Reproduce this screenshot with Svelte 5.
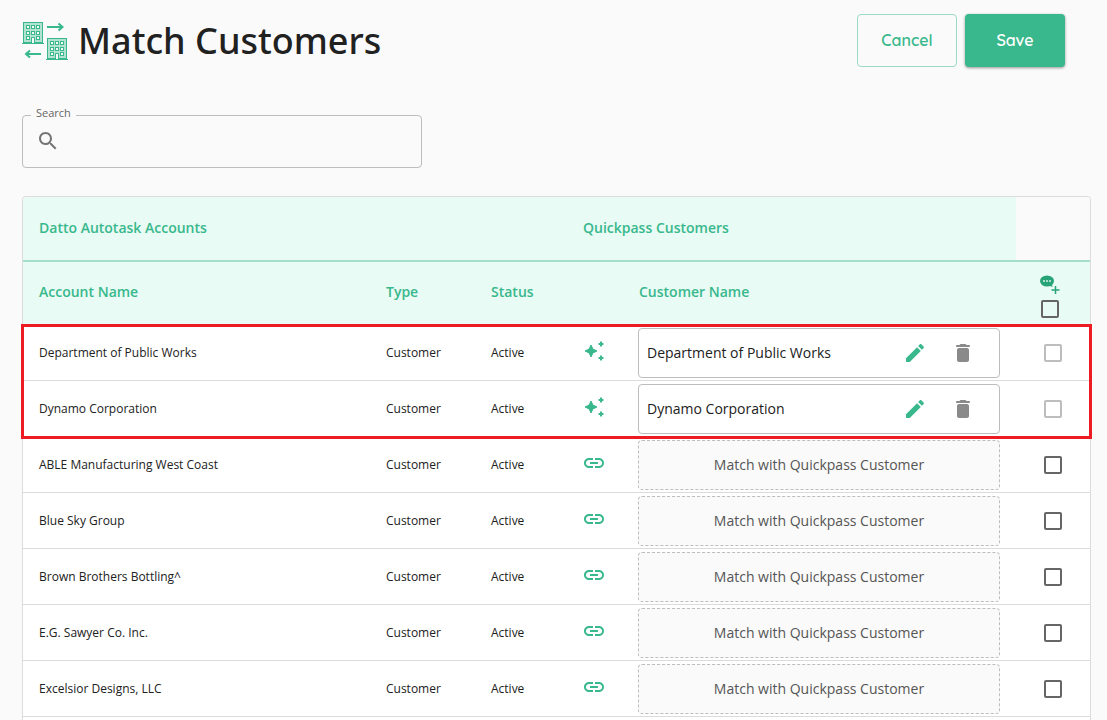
<script>
	let search = $state('');
	let addAll = $state(false);

	let matched = $state([
		{ name: 'Department of Public Works', type: 'Customer', status: 'Active', customer: 'Department of Public Works' },
		{ name: 'Dynamo Corporation', type: 'Customer', status: 'Active', customer: 'Dynamo Corporation' }
	]);

	let unmatched = $state([
		{ name: 'ABLE Manufacturing West Coast', type: 'Customer', status: 'Active', add: false },
		{ name: 'Blue Sky Group', type: 'Customer', status: 'Active', add: false },
		{ name: 'Brown Brothers Bottling^', type: 'Customer', status: 'Active', add: false },
		{ name: 'E.G. Sawyer Co. Inc.', type: 'Customer', status: 'Active', add: false },
		{ name: 'Excelsior Designs, LLC', type: 'Customer', status: 'Active', add: false }
	]);

	function toggleAll() {
		unmatched.forEach((row) => (row.add = addAll));
	}
</script>

{#snippet building(x, y)}
	<g transform="translate({x} {y})">
		<rect x="1.5" y="0.5" width="19" height="20" fill="#b2e3d1" stroke="#38b88c" />
		<path d="M0 21.5h22" stroke="#38b88c" />
		{#each [4.5, 9.5, 14.5] as wx}
			{#each [3.5, 9.5, 14.5] as wy}
				{#if wx !== 9.5 || wy !== 14.5}
					<rect x={wx} y={wy} width="3" height="3" fill="#fafafa" stroke="#38b88c" />
				{/if}
			{/each}
		{/each}
		<path d="M9.5 21v-5.5h3V21" fill="#fafafa" stroke="#38b88c" />
	</g>
{/snippet}

<div class="page">
	<header>
		<svg class="logo" width="48" height="40" viewBox="0 0 48 40" fill="none">
			{@render building(0, 1)}
			{@render building(24, 17)}
			<path d="M25 6h15M36.5 2.5L40.5 6l-4 3.5" stroke="#38b88c" stroke-width="2" />
			<path d="M19 33H4M8 29.500L4 33l4 3.500" stroke="#38b88c" stroke-width="2" />
		</svg>
		<h1>Match Customers</h1>
		<div class="actions">
			<button class="cancel">Cancel</button>
			<button class="save">Save</button>
		</div>
	</header>

	<fieldset class="search">
		<legend><label for="search">Search</label></legend>
		<div class="field">
			<svg width="24" height="24" viewBox="0 0 24 24" fill="#757575">
				<path d="M15.5 14h-.79l-.28-.27C15.41 12.590 16 11.110 16 9.500 16 5.910 13.090 3 9.500 3S3 5.910 3 9.500 5.910 16 9.500 16c1.610 0 3.090-.59 4.230-1.570l.27.28v.79l5 4.990L20.490 19l-4.990-5zm-6 0C7.010 14 5 11.990 5 9.500S7.010 5 9.500 5 14 7.010 14 9.500 11.990 14 9.500 14z" />
			</svg>
			<input id="search" type="text" bind:value={search} />
		</div>
	</fieldset>

	<div class="panel">
		<table>
			<colgroup>
				<col />
				<col class="col-type" />
				<col class="col-status" />
				<col class="col-icon" />
				<col class="col-customer" />
				<col class="col-check" />
			</colgroup>
			<thead>
				<tr class="groups">
					<th colspan="3">Datto Autotask Accounts</th>
					<th colspan="2">Quickpass Customers</th>
					<td class="blank"></td>
				</tr>
				<tr class="columns">
					<th>Account Name</th>
					<th>Type</th>
					<th>Status</th>
					<th></th>
					<th>Customer Name</th>
					<th class="add-all">
						<svg width="22" height="20" viewBox="0 0 22 20">
							<ellipse cx="8" cy="6" rx="7" ry="5.500" fill="#26a477" />
							<path d="M9 10l4-1 .5 3z" fill="#26a477" />
							<path d="M4 6h2M7 6h2M10 6h2" stroke="#d5efe5" stroke-width="1.500" />
							<path d="M16.500 11v8M12.500 15h8" stroke="#26a477" stroke-width="1.500" />
						</svg>
						<input type="checkbox" aria-label="Add all customers" bind:checked={addAll} onchange={toggleAll} />
					</th>
				</tr>
			</thead>
			<tbody class="highlight">
				{#each matched as row}
					<tr>
						<td>{row.name}</td>
						<td>{row.type}</td>
						<td>{row.status}</td>
						<td class="icon">
							<svg width="24" height="24" viewBox="0 0 24 24" fill="#38b88c" stroke="#38b88c" stroke-linejoin="round">
								<path d="M9 6l1.900 4.100L15 12l-4.100 1.900L9 18l-1.900-4.100L3 12l4.100-1.900z" />
								<path d="M19 2.500l.8 1.700 1.700.8-1.700.8-.8 1.700-.8-1.700-1.700-.8 1.700-.8zM19 16.500l.8 1.700 1.700.8-1.700.8-.8 1.700-.8-1.700-1.700-.8 1.700-.8z" />
							</svg>
						</td>
						<td class="customer">
							<div class="match">
								<span>{row.customer}</span>
								<button aria-label="Edit match">
									<svg width="24" height="24" viewBox="0 0 24 24" fill="#38b88c">
										<path d="M3 17.250V21h3.750L17.810 9.940l-3.750-3.750L3 17.250zM20.710 7.040c.39-.39.39-1.020 0-1.410l-2.340-2.340c-.39-.39-1.020-.39-1.410 0l-1.830 1.830 3.750 3.750 1.830-1.830z" />
									</svg>
								</button>
								<button aria-label="Remove match">
									<svg width="24" height="24" viewBox="0 0 24 24" fill="#8a8a8a">
										<path d="M6 19c0 1.100.9 2 2 2h8c1.100 0 2-.9 2-2V9c0-1.100-.9-2-2-2H8c-1.100 0-2 .9-2 2v10zM18 4h-2.500l-.71-.71c-.18-.18-.44-.29-.7-.29H9.910c-.26 0-.52.11-.7.29L8.500 4H6c-.55 0-1 .45-1 1s.45 1 1 1h12c.55 0 1-.45 1-1s-.45-1-1-1z" />
									</svg>
								</button>
							</div>
						</td>
						<td class="check"><input type="checkbox" aria-label="Add {row.name}" disabled /></td>
					</tr>
				{/each}
			</tbody>
			<tbody>
				{#each unmatched as row}
					<tr>
						<td>{row.name}</td>
						<td>{row.type}</td>
						<td>{row.status}</td>
						<td class="icon">
							<svg width="24" height="24" viewBox="0 0 24 24" fill="#38b88c">
								<path d="M3.900 12c0-1.710 1.390-3.100 3.100-3.100h4V7H7c-2.760 0-5 2.240-5 5s2.240 5 5 5h4v-1.900H7c-1.710 0-3.100-1.390-3.100-3.100zM8 13h8v-2H8v2zm9-6h-4v1.900h4c1.710 0 3.100 1.390 3.100 3.100s-1.390 3.100-3.100 3.100h-4V17h4c2.760 0 5-2.240 5-5s-2.240-5-5-5z" />
							</svg>
						</td>
						<td class="customer"><button class="match empty">Match with Quickpass Customer</button></td>
						<td class="check"><input type="checkbox" aria-label="Add {row.name}" bind:checked={row.add} /></td>
					</tr>
				{/each}
			</tbody>
		</table>
	</div>
</div>

<style>
	:global(body) {
		background: #fafafa;
	}

	.page {
		display: flex;
		flex-direction: column;
		box-sizing: border-box;
		height: 100vh;
		overflow: hidden;
		padding: 14px 16px 0 22px;
		font-family: 'Open Sans', sans-serif;
		color: #212121;
	}

	header {
		display: flex;
		align-items: center;
		height: 54px;
		padding-right: 26px;
		margin-bottom: 38px;
		flex-shrink: 0;
	}

	h1 {
		margin: 0 0 0 8px;
		font-family: 'Noto Sans', 'Open Sans', sans-serif;
		font-size: 36px;
		line-height: 54px;
		font-weight: 500;
	}

	.actions {
		display: flex;
		gap: 8px;
		align-self: flex-start;
		margin-left: auto;
	}

	.actions button {
		width: 100px;
		height: 53px;
		padding-bottom: 2px;
		border-radius: 4px;
		font: 600 16px Quicksand, Lato, sans-serif;
		cursor: pointer;
	}

	.cancel {
		background: transparent;
		border: 1px solid #9bdbc5;
		color: #38b88c;
	}

	.save {
		background: #38b88c;
		border: none;
		color: #fff;
		box-shadow: 0 1px 3px rgba(0, 0, 0, 0.4);
	}

	/* Search */
	.search {
		box-sizing: border-box;
		width: 400px;
		height: 62px;
		margin: 0 0 28px;
		padding: 0 13px;
		border: 1px solid #bdbdbd;
		border-radius: 4px;
		flex-shrink: 0;
	}

	.search legend {
		margin-left: -5px;
		padding: 0 5px 4px;
		font-size: 11px;
		line-height: 14px;
		color: #666;
	}

	.field {
		display: flex;
		align-items: center;
		height: 34px;
	}

	.field input {
		flex: 1;
		min-width: 0;
		border: none;
		outline: none;
		background: none;
		font: 14px 'Open Sans', sans-serif;
	}

	/* Table */
	.panel {
		flex: 1;
		min-height: 0;
		border: 1px solid #dcdcdc;
		border-bottom: none;
		border-radius: 4px 4px 0 0;
		background: #fff;
	}

	table {
		width: 100%;
		table-layout: fixed;
		border-collapse: separate;
		border-spacing: 0;
	}

	.col-type {
		width: 105px;
	}

	.col-status {
		width: 92px;
	}

	.col-icon {
		width: 56px;
	}

	.col-customer {
		width: 393px;
	}

	.col-check {
		width: 74px;
	}

	th {
		box-sizing: border-box;
		height: 64px;
		padding: 0 16px 2px;
		text-align: left;
		font-size: 14px;
		font-weight: 600;
		color: #38b88c;
		background: #e9fbf5;
	}

	td {
		box-sizing: border-box;
		height: 56px;
		padding: 0 16px;
		border-bottom: 1px solid #dcdcdc;
		font-size: 12px;
	}

	.groups th,
	.groups td {
		height: 65px;
		border-bottom: 2px solid #a3dfca;
	}

	.groups th:first-child {
		border-top-left-radius: 3px;
	}

	.blank {
		background: #fafafa;
		border-top-right-radius: 3px;
	}

	.columns th {
		height: 63px;
		padding-bottom: 5px;
	}

	.columns .add-all {
		padding: 5px 29px 0 23px;
	}

	.add-all svg {
		display: block;
		margin-bottom: 5px;
	}

	input[type='checkbox'] {
		appearance: none;
		display: block;
		box-sizing: border-box;
		width: 18px;
		height: 18px;
		margin: 0 auto;
		border: 2px solid #666;
		border-radius: 2px;
	}

	input[type='checkbox']:checked {
		background: #38b88c;
		border-color: #38b88c;
	}

	input[type='checkbox']:disabled {
		border-color: #bdbdbd;
	}

	.icon svg {
		display: block;
		margin-bottom: 4px;
	}

	.icon {
		padding: 0 15px;
	}

	.customer {
		padding: 2px 16px 1px 15px;
	}

	.match {
		display: flex;
		align-items: center;
		gap: 24px;
		box-sizing: border-box;
		width: 100%;
		height: 50px;
		padding: 0 24px 0 8px;
		border: 1px solid #bdbdbd;
		border-radius: 4px;
		font-size: 14px;
	}

	.match span {
		flex: 1;
		padding-bottom: 2px;
	}

	.match button {
		padding: 0;
		border: none;
		background: none;
		line-height: 0;
		cursor: pointer;
	}

	.empty {
		justify-content: center;
		padding: 0 0 2px;
		border-style: dashed;
		background: #fafafa;
		font-family: inherit;
		color: #555;
		cursor: pointer;
	}

	.highlight {
		position: relative;
	}

	.highlight::after {
		content: '';
		position: absolute;
		inset: -1px -2px -2px;
		border: 3px solid #ed1c24;
		pointer-events: none;
	}
</style>
